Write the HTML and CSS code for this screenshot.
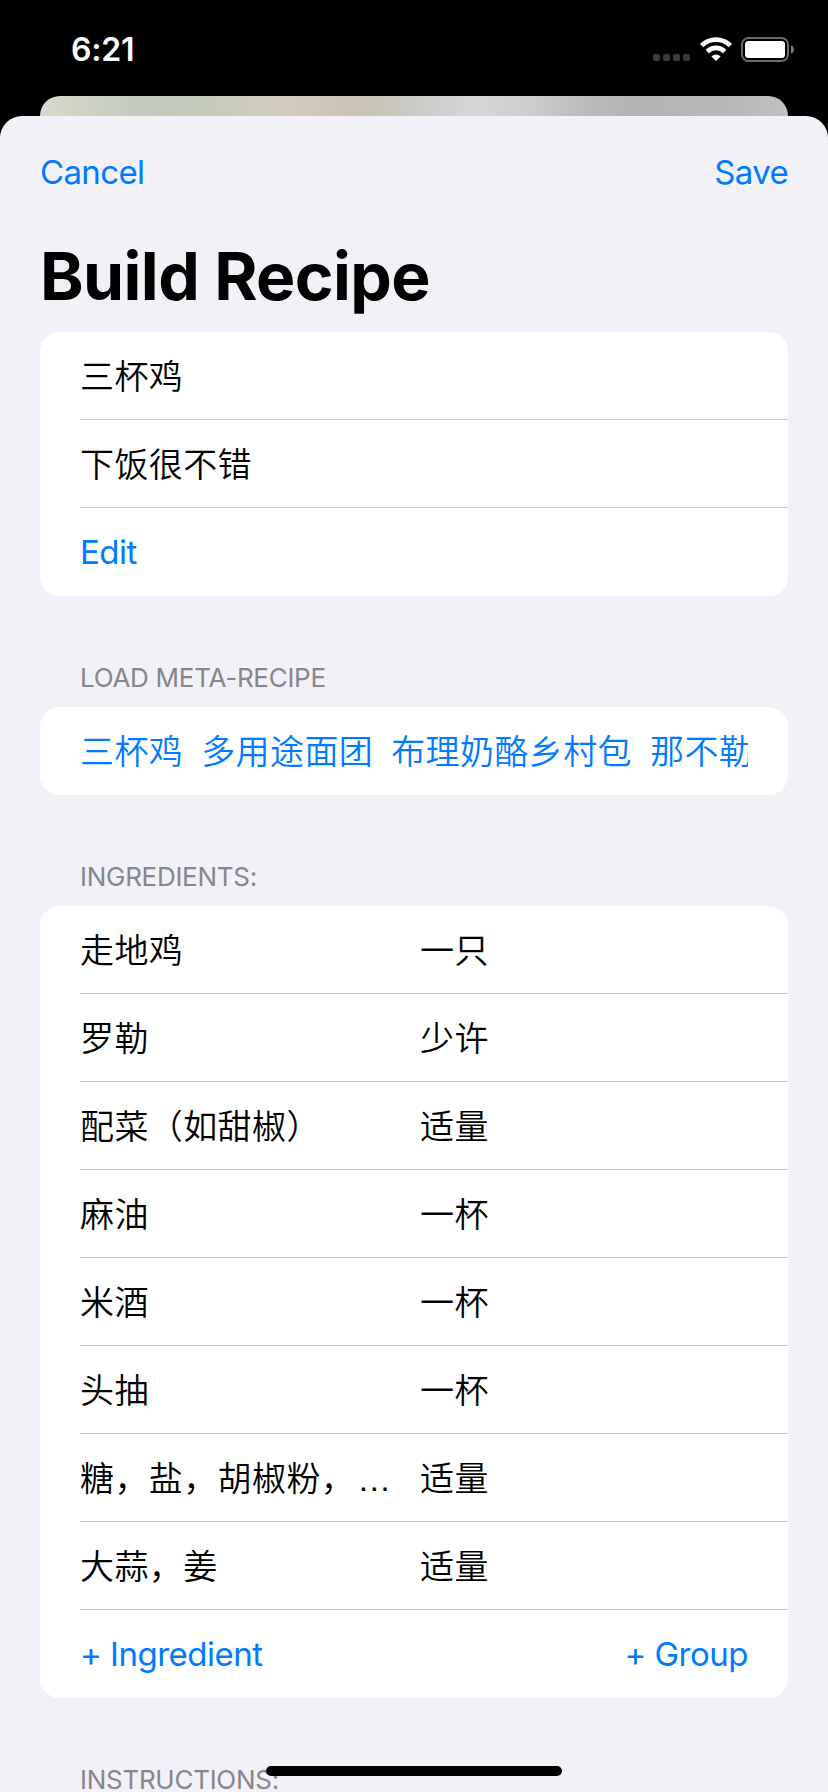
FILE: index.html
```html
<!DOCTYPE html>
<html lang="zh-Hans">
<head>
<meta charset="utf-8">
<title>Build Recipe</title>
<link rel="stylesheet" href="styles.css">
</head>
<body>
<div class="status">
  <span class="time">6:21</span>
  <div class="indicators">
    <svg class="signal" width="38" height="7" viewBox="0 0 38 7"><g fill="#3a3a3a"><rect x="0" width="7" height="7" rx="2"/><rect x="10" width="7" height="7" rx="2"/><rect x="20" width="7" height="7" rx="2"/><rect x="30" width="7" height="7" rx="2"/></g></svg>
    <svg class="wifi" width="32" height="24" viewBox="0 0 32 24"><g fill="none" stroke="#fff" stroke-width="4.7"><path d="M1.600 8.700A20.300 20.300 0 0 1 30.400 8.700"/><path d="M7.300 14.500A12.300 12.300 0 0 1 24.700 14.500"/></g><path d="M16 24L11.400 19.400A6.600 6.600 0 0 1 20.600 19.400Z" fill="#fff"/></svg>
    <svg class="battery" width="54" height="26" viewBox="0 0 54 26"><rect x="1" y="1" width="46" height="23" rx="6.5" fill="none" stroke="#6b6b6b" stroke-width="2"/><rect x="4" y="4" width="40" height="17" rx="3.5" fill="#fff"/><path d="M50 8.300C52 9 53 10.800 53 12.500S52 16 50 16.700Z" fill="#7a7a7a"/></svg>
  </div>
</div>
<div class="backdrop"></div>
<main class="sheet">
  <nav class="nav"><a class="cancel">Cancel</a><a class="save">Save</a></nav>
  <h1 class="title">Build Recipe</h1>
  <section class="card">
    <div class="row">三杯鸡</div>
    <div class="row">下饭很不错</div>
    <div class="row link actions"><span class="button">Edit</span></div>
  </section>
  <h2 class="label">LOAD META-RECIPE</h2>
  <section class="card">
    <div class="row link"><div class="chips"><span>三杯鸡</span><span>多用途面团</span><span>布理奶酪乡村包</span><span>那不勒</span></div></div>
  </section>
  <h2 class="label">INGREDIENTS:</h2>
  <section class="card">
    <div class="row pair"><span>走地鸡</span><span>一只</span></div>
    <div class="row pair"><span>罗勒</span><span>少许</span></div>
    <div class="row pair"><span>配菜（如甜椒）</span><span>适量</span></div>
    <div class="row pair"><span>麻油</span><span>一杯</span></div>
    <div class="row pair"><span>米酒</span><span>一杯</span></div>
    <div class="row pair"><span>头抽</span><span>一杯</span></div>
    <div class="row pair"><span>糖，盐，胡椒粉，<span class="dots">…</span></span><span>适量</span></div>
    <div class="row pair"><span>大蒜，姜</span><span>适量</span></div>
    <div class="row link actions"><span class="button">+ Ingredient</span><span class="button">+ Group</span></div>
  </section>
  <h2 class="label">INSTRUCTIONS:</h2>
</main>
<div class="home"></div>
</body>
</html>
```
FILE: styles.css
```css
* { box-sizing: border-box; }
body {
  margin: 0;
  width: 828px;
  height: 1792px;
  overflow: hidden;
  position: relative;
  display: flex;
  flex-direction: column;
  background: #000;
  font-family: Inter, "Noto Sans CJK SC", sans-serif;
  font-size: 33px;
}
.status {
  flex: none;
  height: 96px;
  padding: 0 33px 0 71px;
  display: flex;
  justify-content: space-between;
  align-items: flex-start;
  color: #fff;
}
.time {
  margin-top: 30px;
  line-height: 40px;
  font-size: 32px;
  font-weight: 600;
  letter-spacing: -0.2px;
}
.indicators {
  margin-top: 37px;
  display: flex;
  align-items: flex-start;
}
.signal { margin-top: 17px; }
.wifi { margin-left: 9px; }
.battery { margin-left: 9px; }
.backdrop {
  flex: none;
  height: 20px;
  margin: 0 40px;
  border-radius: 20px 20px 0 0;
  background: linear-gradient(90deg, #d9d9cd 0, #d1d3c5 40px, #c5cdc2 85px, #c1cabe 115px, #c7ccba 175px, #d2ccbc 230px, #d3cabc 255px, #cdc2b7 310px, #c9c4b8 335px, #cccbc8 375px, #d5d7d6 435px, #cccfcd 490px, #b9bbbc 545px, #b3b5b5 590px, #b4b6b7 640px, #b7b9b8 690px, #bfc2be 748px);
}
.sheet {
  flex: 1;
  min-height: 0;
  padding: 0 40px;
  border-radius: 22px 22px 0 0;
  background: #f2f1f7;
}
.nav {
  height: 112px;
  padding-top: 36px;
  display: flex;
  justify-content: space-between;
  line-height: 40px;
  letter-spacing: -0.65px;
  color: #007aff;
}
.title {
  margin: 0;
  height: 104px;
  padding-top: 8px;
  line-height: 80px;
  font-size: 66px;
  font-weight: 700;
  letter-spacing: -0.6px;
  color: #000;
}
.card {
  border-radius: 20px;
  background: #fff;
  overflow: hidden;
}
.row {
  height: 88px;
  margin-left: 40px;
  padding-right: 40px;
  border-bottom: 1px solid #c6c6c8;
  line-height: 86px;
  font-family: "Noto Sans CJK SC", sans-serif;
  font-size: 34px;
  font-weight: 350;
  letter-spacing: 0.4px;
  white-space: nowrap;
  color: #000;
}
.row:last-child { border-bottom: 0; }
.row.link { color: #007aff; }
.pair {
  display: grid;
  grid-template-columns: 1fr 1fr;
  column-gap: 12px;
}
.dots {
  margin-left: 2px;
  line-height: 1;
  font-family: "Liberation Sans", sans-serif;
}
.chips {
  display: flex;
  gap: 18px;
  overflow: hidden;
}
.chips span { flex: none; }
.actions {
  display: flex;
  justify-content: space-between;
}
.button {
  line-height: 88px;
  font-family: Inter, sans-serif;
  font-size: 33px;
  font-weight: 400;
  letter-spacing: -0.5px;
}
.label {
  margin: 0;
  height: 111px;
  padding: 66px 0 0 40px;
  line-height: 32px;
  font-size: 26px;
  font-weight: 400;
  letter-spacing: -0.28px;
  color: #86868b;
}
.home {
  position: absolute;
  left: 266px;
  bottom: 16px;
  width: 296px;
  height: 10px;
  border-radius: 5px;
  background: #000;
}
```
